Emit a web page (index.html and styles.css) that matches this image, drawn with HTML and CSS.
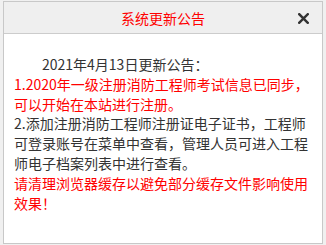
FILE: index.html
```html
<!DOCTYPE html>
<html lang="zh-CN">
<head>
<meta charset="utf-8">
<link rel="stylesheet" href="styles.css">
</head>
<body>
<div class="dialog">
  <div class="header">
    <span class="title">系统更新公告</span>
    <span class="close"><svg width="11" height="11" viewBox="0 0 11 11"><path d="M1.2 1.2L9.8 9.8M9.8 1.2L1.2 9.8" stroke="#333" stroke-width="2.4" stroke-linecap="square"/></svg></span>
  </div>
  <div class="body">
    <p class="indent">2021年4月13日更新公告：</p>
    <p class="red">1.2020年一级注册消防工程师考试信息已同步，可以开始在本站进行注册。</p>
    <p>2.添加注册消防工程师注册证电子证书，工程师可登录账号在菜单中查看，管理人员可进入工程师电子档案列表中进行查看。</p>
    <p class="red">请清理浏览器缓存以避免部分缓存文件影响使用效果！</p>
  </div>
</div>
</body>
</html>
```
FILE: styles.css
```css
html, body {
  margin: 0;
  padding: 0;
  background: #f0f0f0;
}
body {
  padding: 1px 3px 1px 3px;
  font-family: "Noto Sans CJK SC", "Noto Sans", sans-serif;
}
.dialog {
  width: 318px;
  height: 241px;
  border: 1px solid #c8c8c8;
  background: #fff;
  display: flex;
  flex-direction: column;
}
.header {
  height: 31px;
  background: #efefef;
  border-bottom: 1px solid #cccccc;
  display: flex;
  align-items: center;
  justify-content: center;
  position: relative;
}
.title {
  color: #ff0000;
  font-size: 14px;
  line-height: 20px;
}
.close {
  position: absolute;
  right: 13px;
  top: 11px;
  width: 11px;
  height: 11px;
  display: block;
}
.close svg {
  display: block;
}
.body {
  padding: 21px 12px 0 10px;
  font-size: 14px;
  line-height: 19.8px;
  color: #333;
}
.body p {
  margin: 0;
}
.indent {
  text-indent: 28px;
}
.red {
  color: #ff0000;
}
```
